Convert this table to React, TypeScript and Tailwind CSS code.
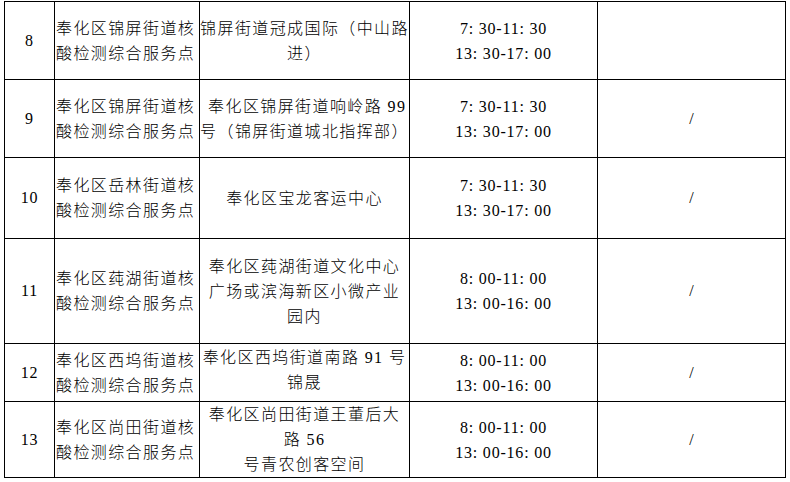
const FONT = '"Liberation Serif", "Noto Sans CJK SC", serif';

type Row = {
  no: string;
  name: string;
  place: string[];
  hours: string[];
  note: string;
  height: string;
  placeAlign?: string;
};

const ROWS: Row[] = [
  {
    no: '8',
    name: '奉化区锦屏街道核',
    place: ['锦屏街道冠成国际（中山路', '进）'],
    hours: ['7: 30-11: 30', '13: 30-17: 00'],
    note: '',
    height: 'h-[78px]',
  },
  {
    no: '9',
    name: '奉化区锦屏街道核',
    place: ['\u00a0奉化区锦屏街道响岭路 99', '号（锦屏街道城北指挥部）'],
    hours: ['7: 30-11: 30', '13: 30-17: 00'],
    note: '/',
    height: 'h-[78px]',
  },
  {
    no: '10',
    name: '奉化区岳林街道核',
    place: ['奉化区宝龙客运中心'],
    hours: ['7: 30-11: 30', '13: 30-17: 00'],
    note: '/',
    height: 'h-[81px]',
  },
  {
    no: '11',
    name: '奉化区莼湖街道核',
    place: ['奉化区莼湖街道文化中心', '广场或滨海新区小微产业', '园内'],
    hours: ['8: 00-11: 00', '13: 00-16: 00'],
    note: '/',
    height: 'h-[105px]',
  },
  {
    no: '12',
    name: '奉化区西坞街道核',
    place: ['奉化区西坞街道南路 91 号', '锦晟'],
    hours: ['8: 00-11: 00', '13: 00-16: 00'],
    note: '/',
    height: 'h-[58px]',
    placeAlign: 'align-top pt-[1px]',
  },
  {
    no: '13',
    name: '奉化区尚田街道核',
    place: ['奉化区尚田街道王董后大', '路 56', '号青农创客空间'],
    hours: ['8: 00-11: 00', '13: 00-16: 00'],
    note: '/',
    height: 'h-[76px]',
  },
];

export default function App() {
  return (
    <div className="min-h-[482px] w-[790px] bg-white pl-[4px] pt-[1px] text-black" style={{ fontFamily: FONT }}>
      <table className="w-[781px] table-fixed border-collapse">
        <colgroup>
          <col className="w-[50px]" />
          <col className="w-[145px]" />
          <col className="w-[210px]" />
          <col className="w-[188px]" />
          <col className="w-[188px]" />
        </colgroup>
        <tbody>
          {ROWS.map((row) => (
            <tr key={row.no} className={row.height}>
              <td className="border border-black p-0 text-center align-middle text-[16px] tracking-[0.8px]">
                {row.no}
              </td>
              <td className="border border-black p-0 pl-[1px] align-middle text-[16px] leading-[25px] font-light tracking-[1.4px] whitespace-nowrap">
                <div>{row.name}</div>
                <div>酸检测综合服务点</div>
              </td>
              <td
                className={`border border-black p-0 text-center text-[16px] leading-[25px] font-light tracking-[1.4px] whitespace-nowrap ${
                  row.placeAlign ?? 'align-middle'
                }`}
              >
                <div className="overflow-hidden">
                  {row.place.map((line) => (
                    <div key={line}>{line}</div>
                  ))}
                </div>
              </td>
              <td className="border border-black p-0 text-center align-middle text-[16px] leading-[25px] tracking-[0.8px]">
                {row.hours.map((line) => (
                  <div key={line}>{line}</div>
                ))}
              </td>
              <td className="border border-black p-0 text-center align-middle text-[16px]">{row.note}</td>
            </tr>
          ))}
        </tbody>
      </table>
    </div>
  );
}
